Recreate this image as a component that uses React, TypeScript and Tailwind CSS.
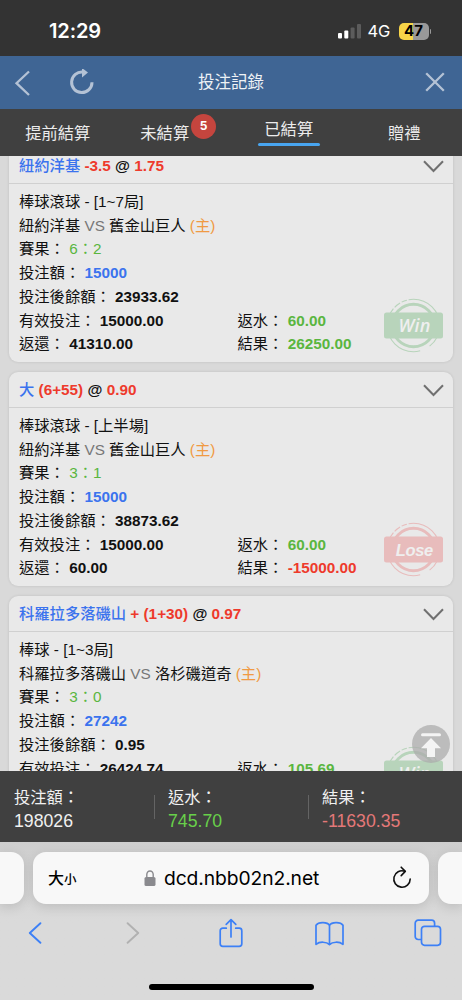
type Bet = {
  pick: string;
  line: string;
  odds: string;
  market: string;
  home: string;
  away: string;
  score: string;
  stake: string;
  balance: string;
  valid: string;
  returned: string;
  rebate: string;
  result: string;
  status: "Win" | "Lose";
};

const bets: Bet[] = [
  {
    pick: "紐約洋基",
    line: "-3.5",
    odds: "1.75",
    market: "棒球滾球 - [1~7局]",
    home: "紐約洋基",
    away: "舊金山巨人",
    score: "6：2",
    stake: "15000",
    balance: "23933.62",
    valid: "15000.00",
    returned: "41310.00",
    rebate: "60.00",
    result: "26250.00",
    status: "Win",
  },
  {
    pick: "大",
    line: "(6+55)",
    odds: "0.90",
    market: "棒球滾球 - [上半場]",
    home: "紐約洋基",
    away: "舊金山巨人",
    score: "3：1",
    stake: "15000",
    balance: "38873.62",
    valid: "15000.00",
    returned: "60.00",
    rebate: "60.00",
    result: "-15000.00",
    status: "Lose",
  },
  {
    pick: "科羅拉多落磯山",
    line: "+ (1+30)",
    odds: "0.97",
    market: "棒球 - [1~3局]",
    home: "科羅拉多落磯山",
    away: "洛杉磯道奇",
    score: "3：0",
    stake: "27242",
    balance: "0.95",
    valid: "26424.74",
    returned: "52166.74",
    rebate: "105.69",
    result: "25030.43",
    status: "Win",
  },
];

const StatusBar = () => (
  <div className="flex h-14 shrink-0 items-center justify-between bg-[#333333] pt-[6px] pr-[31px] pl-[49px] font-['Inter',sans-serif] text-white">
    <span className="text-[20px] font-semibold tracking-[-0.1px]">12:29</span>
    <div className="flex items-center">
      <svg width="23" height="16" viewBox="0 0 23 16">
        <rect x="0" y="10" width="4" height="5.5" rx="1" fill="#fff" />
        <rect x="6.3" y="7.5" width="4" height="8" rx="1" fill="#fff" />
        <rect x="12.6" y="4.5" width="4" height="11" rx="1" fill="#5c5c5c" />
        <rect x="19" y="1" width="4" height="14.5" rx="1" fill="#5c5c5c" />
      </svg>
      <span className="ml-[7px] w-[23px] text-[16.5px] tracking-[-0.1px]">
        4G
      </span>
      <div className="ml-[8px] flex h-[17px] w-[30px] items-center justify-center rounded-[5px] bg-linear-to-r from-[#f8d548] from-47% to-[#999999] to-47% text-[15px] font-bold text-black">
        47
      </div>
      <div className="ml-px h-[5px] w-[1.5px] rounded-r bg-[#999999]" />
    </div>
  </div>
);

const Header = () => (
  <header className="grid h-[53px] shrink-0 grid-cols-3 items-center bg-[#3f6594] px-[14px] text-[#b4c2d5]">
    <div className="flex items-center">
      <svg width="16" height="26" viewBox="0 0 16 26" fill="none">
        <path d="M15 1.5 2.5 13.2 15 25" stroke="currentColor" strokeWidth="2.3" />
      </svg>
      <svg className="ml-[38px]" width="28" height="28" viewBox="0 0 28 28">
        <path
          d="M24 13.2A10.2 10.2 0 1 1 15 3.200"
          fill="none"
          stroke="currentColor"
          strokeWidth="3"
        />
        <path d="M14-1 20 3.500 14 8.500Z" fill="currentColor" />
      </svg>
    </div>
    <h1 className="text-center text-[16.5px] text-[#eef2f6]">投注記錄</h1>
    <svg
      className="mr-[3px] -mt-px justify-self-end"
      width="20"
      height="20"
      viewBox="0 0 20 20"
    >
      <path d="M1.2 1.2 18.8 18.8M18.8 1.2 1.2 18.8" stroke="currentColor" strokeWidth="2.3" />
    </svg>
  </header>
);

const Tabs = () => (
  <nav className="grid h-[47px] shrink-0 grid-cols-4 items-center bg-[#404040] text-center text-[16.3px] leading-6 text-[#ececec]">
    <span>提前結算</span>
    <span className="pr-[17px]">
      <span className="relative">
        未結算
        <span className="absolute -top-[10px] -right-[27px] flex size-[25px] items-center justify-center rounded-full bg-[#c5453e] font-['Inter',sans-serif] text-[12px] font-bold text-white">
          5
        </span>
      </span>
    </span>
    <span className="flex flex-col items-center gap-[2px] pb-[2px]">
      已結算
      <span className="h-[3.5px] w-[62px] rounded-full bg-[#48a5f0]" />
    </span>
    <span>贈禮</span>
  </nav>
);

const Stamp = ({ status }: { status: Bet["status"] }) => {
  const win = status === "Win";
  const color = win ? "#b8d4bb" : "#e8bcbc";
  return (
    <svg
      className="absolute right-[10px] bottom-[9px]"
      width="59"
      height="55"
      viewBox="0 0 59 55"
      fill="none"
    >
      <circle
        cx="29.5"
        cy="27.5"
        r="26.2"
        stroke={color}
        strokeWidth="1.1"
        pathLength="360"
        strokeDasharray="52 23 145 4 15 4 12 4 101 0"
      />
      <circle cx="29.5" cy="27.5" r="21.2" stroke={color} strokeWidth="3" />
      <rect y="14.5" width="59" height="26" rx="2.5" fill={color} />
      <text
        x="30.5"
        y={win ? 34 : 33.5}
        textAnchor="middle"
        fill="#efefef"
        fontFamily={win ? "Open Sans, sans-serif" : "Liberation Sans, sans-serif"}
        fontSize={win ? 18 : 16.5}
        fontWeight={win ? 600 : 700}
        fontStyle="italic"
        textLength={win ? 32 : 37.5}
      >
        {status}
      </text>
    </svg>
  );
};

const BetCard = ({ bet }: { bet: Bet }) => (
  <article className="relative h-[214px] shrink-0 rounded-[9px] bg-[#e9e9e9] text-[15.3px] text-[#111111] shadow-[0_0_3px_rgba(0,0,0,0.12)]">
    <div className="flex h-9 items-center justify-between border-b border-[#d0d0d0] pt-px pr-[9px] pl-[10px] font-bold">
      <p className="whitespace-pre">
        <span className="font-medium text-[#3b73ee]">{bet.pick}</span>{" "}
        <span className="text-[#ee3a2c]">{bet.line}</span> @{" "}
        <span className="text-[#ee3a2c]">{bet.odds}</span>
      </p>
      <svg width="21" height="13" viewBox="0 0 21 13" fill="none">
        <path d="M1 1.2 10.5 11 20 1.2" stroke="#707070" strokeWidth="2" />
      </svg>
    </div>
    <div className="pt-[6px] pl-[10px] leading-[23.7px] whitespace-nowrap">
      <p>{bet.market}</p>
      <p>
        {bet.home} <span className="text-[#777777]">VS</span> {bet.away}{" "}
        <span className="text-[#f09a43]">(主)</span>
      </p>
      <p>
        賽果： <span className="text-[#5ab63f]">{bet.score}</span>
      </p>
      <p>
        投注額： <b className="text-[#3b73ee]">{bet.stake}</b>
      </p>
      <p>
        投注後餘額： <b>{bet.balance}</b>
      </p>
      <div className="grid grid-cols-[218.5px_1fr]">
        <p>
          有效投注： <b>{bet.valid}</b>
        </p>
        <p>
          返水： <b className="text-[#5ab63f]">{bet.rebate}</b>
        </p>
        <p>
          返還： <b>{bet.returned}</b>
        </p>
        <p>
          結果：{" "}
          <b className={bet.status === "Win" ? "text-[#5ab63f]" : "text-[#ee3a2c]"}>
            {bet.result}
          </b>
        </p>
      </div>
    </div>
    <Stamp status={bet.status} />
  </article>
);

const Summary = () => (
  <div className="flex h-[71px] shrink-0 items-center bg-[#404040] text-[16.3px] leading-6 text-[#f0f0f0]">
    <div className="w-[154px] pt-[5px] pl-[14px]">
      <p>投注額：</p>
      <p className="text-[17.7px]">198026</p>
    </div>
    <div className="h-6 w-px bg-[#646464]" />
    <div className="w-[153px] pt-[5px] pl-[13px]">
      <p>返水：</p>
      <p className="text-[17.7px] text-[#68d04a]">745.70</p>
    </div>
    <div className="h-6 w-px bg-[#646464]" />
    <div className="pt-[5px] pl-[13px]">
      <p>結果：</p>
      <p className="text-[17.7px] text-[#e47878]">-11630.35</p>
    </div>
  </div>
);

const AddressBar = () => (
  <div className="flex h-[52px] justify-between">
    <div className="w-6 rounded-r-[13px] bg-[#f8f8f8] shadow-[0_3px_12px_rgba(0,0,0,0.12)]" />
    <div className="flex w-[396px] items-center rounded-[13px] bg-[#f8f8f8] pr-[17px] pl-[15px] text-black shadow-[0_3px_12px_rgba(0,0,0,0.12)]">
      <span className="w-[96px] pt-[2px] text-[16px] font-medium">
        大<span className="text-[12.5px]">小</span>
      </span>
      <svg width="12" height="17" viewBox="0 0 12 17">
        <path d="M2.8 8V4.6a3.2 3.6 0 0 1 6.4 0V8" fill="none" stroke="#8a8a8e" strokeWidth="1.4" />
        <rect x=".5" y="7" width="11" height="9" rx="1.6" fill="#8a8a8e" />
      </svg>
      <span className="ml-[8px] pt-px font-['Inter',sans-serif] text-[19.3px] tracking-[-0.1px]">
        dcd.nbb02n2.net
      </span>
      <svg
        className="ml-auto -mt-[2px]"
        width="20"
        height="23"
        viewBox="0 0 20 23"
        fill="none"
        stroke="#111"
        strokeWidth="1.6"
        strokeLinecap="round"
        strokeLinejoin="round"
      >
        <path d="M18.200 13A8.200 8.200 0 1 1 12.800 5.300" />
        <path d="M9.200 1.200 13.300 5.400 9.200 9.600" />
      </svg>
    </div>
    <div className="w-6 rounded-l-[13px] bg-[#f8f8f8] shadow-[0_3px_12px_rgba(0,0,0,0.12)]" />
  </div>
);

const Toolbar = () => (
  <div className="mt-[13px] flex h-8 items-center justify-between px-[20px] text-[#3d80f6] *:flex *:w-[29px] *:justify-center">
    <span>
      <svg width="14" height="22" viewBox="0 0 14 22" fill="none">
        <path d="M12.4 1.2 1.8 11 12.4 20.8" stroke="currentColor" strokeWidth="1.9" strokeLinecap="round" strokeLinejoin="round" />
      </svg>
    </span>
    <span>
      <svg width="14" height="22" viewBox="0 0 14 22" fill="none">
        <path d="M1.6 1.2 12.2 11 1.6 20.8" stroke="#b1b1b1" strokeWidth="1.9" strokeLinecap="round" strokeLinejoin="round" />
      </svg>
    </span>
    <span>
      <svg
        width="26"
        height="30"
        viewBox="0 0 26 30"
        fill="none"
        stroke="currentColor"
        strokeWidth="1.7"
        strokeLinecap="round"
        strokeLinejoin="round"
      >
        <path d="M8.3 10.2H4.8a2.6 2.6 0 0 0-2.6 2.6v13a2.6 2.6 0 0 0 2.6 2.6h16.4a2.6 2.6 0 0 0 2.6-2.6v-13a2.6 2.6 0 0 0-2.6-2.6h-3.5" />
        <path d="M13 19V1.6M8.2 6.4 13 1.6l4.8 4.8" />
      </svg>
    </span>
    <span>
      <svg
        width="29"
        height="25"
        viewBox="0 0 29 25"
        fill="none"
        stroke="currentColor"
        strokeWidth="1.7"
        strokeLinejoin="round"
      >
        <path d="M14.5 4.3C12.5 1.2 3.8.3 1 4.3v19c3.8-3 10.4-2.6 13.5.2 3.1-2.8 9.7-3.2 13.5-.2v-19C25.2.3 16.5 1.2 14.5 4.3Z" />
        <path d="M14.5 4.3v19.2" />
      </svg>
    </span>
    <span>
      <svg
        width="28"
        height="28"
        viewBox="0 0 28 28"
        fill="none"
        stroke="currentColor"
        strokeWidth="1.7"
      >
        <path d="M7.5 20.5H4.2a3 3 0 0 1-3-3V4.2a3 3 0 0 1 3-3h13.4a3 3 0 0 1 3 3v3" />
        <rect x="7.5" y="7.3" width="19" height="19" rx="3" />
      </svg>
    </span>
  </div>
);

const App = () => {
  return (
    <div
      lang="zh-Hant"
      className="flex h-[1000px] w-[462px] flex-col overflow-hidden bg-[#d9d9d9] font-['Liberation_Sans','Noto_Sans_CJK_TC',sans-serif]"
    >
      <StatusBar />
      <Header />
      <Tabs />
      <main className="relative h-[615px] shrink-0 overflow-hidden px-[9px]">
        <div className="-mt-2 flex flex-col gap-[10px]">
          {bets.map((bet) => (
            <BetCard key={bet.pick} bet={bet} />
          ))}
        </div>
        <button
          type="button"
          className="absolute right-[12px] bottom-[8px] size-[38px] rounded-full bg-[#acacac]/75"
        >
          <svg width="38" height="38" viewBox="0 0 38 38" fill="#f4f4f4">
            <rect x="9" y="8.2" width="20" height="3" rx="1.5" />
            <path d="M19 13 29 23.3H23V32H15V23.3H9Z" />
          </svg>
        </button>
      </main>
      <Summary />
      <footer className="flex-1 bg-linear-to-b from-[#cecece] to-[#dadada] to-50% pt-[10px]">
        <AddressBar />
        <Toolbar />
        <div className="mx-auto mt-[35px] h-[6px] w-[165px] rounded-full bg-black" />
      </footer>
    </div>
  );
};

export default App;
